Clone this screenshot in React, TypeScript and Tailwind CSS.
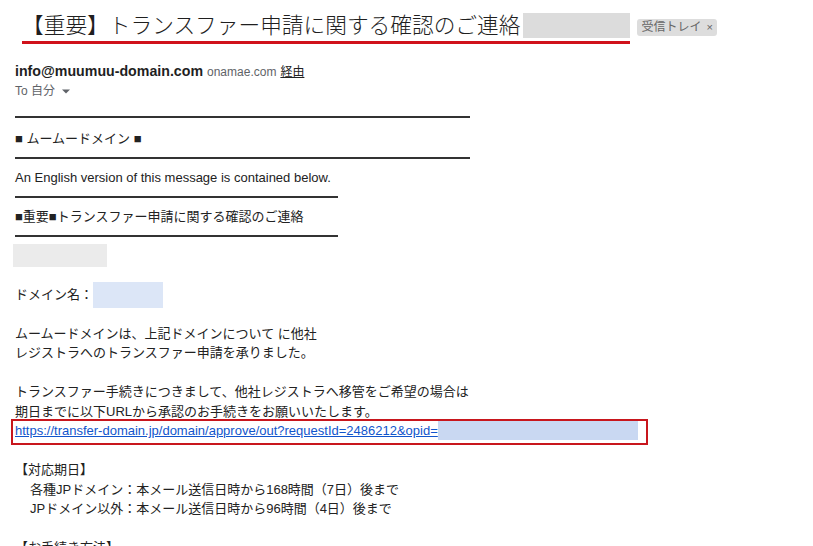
import React from 'react';

const body = '"Liberation Sans", Arial, "Noto Sans CJK JP", sans-serif';

// ━━━ style separator rows from the mail body
const Rule = ({ w }: { w: number }) => (
  <div className="h-[19.5px] flex items-center">
    <div className="h-[2px] bg-[#333]" style={{ width: w }} />
  </div>
);

const Line = ({ children, className = '' }: { children?: React.ReactNode; className?: string }) => (
  <div className={`h-[19.5px] whitespace-nowrap ${className}`}>{children}</div>
);

export default function App() {
  return (
    <div className="w-[813px] h-[546px] overflow-hidden bg-white text-[#222]" style={{ fontFamily: body }}>
      {/* subject */}
      <div className="flex items-center pl-[22px] pt-[13px]">
        <div className="flex items-end border-b-[3px] border-[#d0121b] pb-[3px]">
          <span className="text-[21.7px] leading-[25px] font-light text-[#1f1f1f] whitespace-nowrap">
            【重要】トランスファー申請に関する確認のご連絡
          </span>
          <span className="ml-[3px] w-[107px] h-[25px] bg-[#dcdcdc]" />
        </div>
        <span className="ml-[7px] -mt-[3px] h-[17px] px-[4px] rounded-[3px] bg-[#dddddd] text-[12px] leading-[17px] text-[#666] flex items-center gap-[5px]">
          受信トレイ <span className="text-[11px]">×</span>
        </span>
      </div>

      {/* sender */}
      <div className="pl-[15px] pt-[18px]">
        <div className="flex items-baseline gap-[4px] leading-[19px]">
          <span className="text-[14.2px] font-bold text-[#1f1f1f]">info@muumuu-domain.com</span>
          <span className="text-[12px] text-[#5f6368]">onamae.com</span>
          <span className="text-[12px] text-[#222] underline">経由</span>
        </div>
        <div className="flex items-center gap-[4px] text-[12px] leading-[18px] text-[#5f6368]">
          <span>To 自分</span>
          <svg width="10" height="10" viewBox="0 0 10 10" className="ml-[2px]">
            <path d="M1 3.5 L9 3.5 L5 7.5 Z" fill="#5f6368" />
          </svg>
        </div>
      </div>

      {/* message body */}
      <div className="pl-[15px] pt-[7px] text-[13px] leading-[19.5px]">
        <Rule w={455} />
        <div className="pt-[2px]">
          <Line>■ ムームードメイン ■</Line>
          <Rule w={455} />
          <Line>An English version of this message is contained below.</Line>
          <Rule w={323} />
          <Line>■重要■トランスファー申請に関する確認のご連絡</Line>
          <Rule w={323} />
          <Line className="flex items-center -ml-[2px]">
            <span className="w-[94px] h-[23px] bg-[#ebebeb]" />
          </Line>
          <Line />
          <Line>
            ドメイン名：
            <span className="inline-block align-middle w-[70px] h-[26px] -my-[4px] bg-[#dce6f7]" />
          </Line>
          <Line />
          <Line>ムームードメインは、上記ドメインについて に他社</Line>
          <Line>レジストラへのトランスファー申請を承りました。</Line>
          <Line />
          <Line>トランスファー手続きにつきまして、他社レジストラへ移管をご希望の場合は</Line>
          <Line>期日までに以下URLから承認のお手続きをお願いいたします。</Line>
          <div className="relative h-[19.5px] whitespace-nowrap flex items-center">
            <a className="text-[#1155cc] underline">https://transfer-domain.jp/domain/approve/out?requestId=2486212&amp;opid=</a>
            <span className="w-[200px] h-[19px] bg-[#c9d8f2]" />
            <div className="absolute left-[-4px] top-[-2px] w-[637px] h-[26px] border-2 border-[#c8161d]" />
          </div>
          <Line />
          <Line>【対応期日】</Line>
          <Line className="pl-[15px]">各種JPドメイン：本メール送信日時から168時間（7日）後まで</Line>
          <Line className="pl-[15px]">JPドメイン以外：本メール送信日時から96時間（4日）後まで</Line>
          <Line />
          <Line>【お手続き方法】</Line>
        </div>
      </div>
    </div>
  );
}
